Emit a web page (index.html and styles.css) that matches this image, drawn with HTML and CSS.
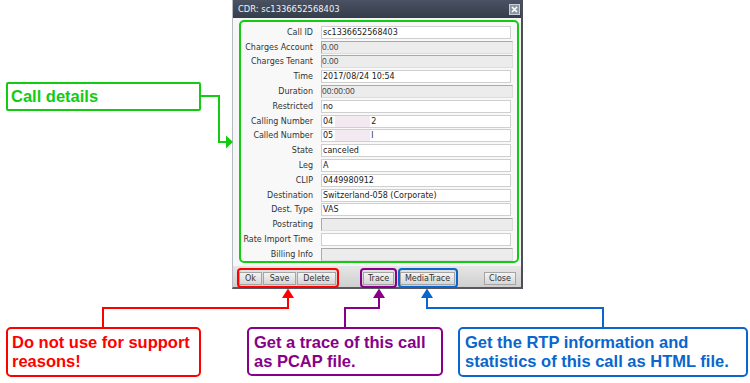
FILE: index.html
```html
<!DOCTYPE html>
<html>
<head>
<meta charset="utf-8">
<link rel="stylesheet" href="styles.css">
</head>
<body>
<div class="canvas">
  <div class="dialog">
    <div class="titlebar">
      <span class="title">CDR: sc1336652568403</span>
      <svg class="closex" width="11" height="11" viewBox="0 0 11 11">
        <rect x="0.5" y="0.5" width="10" height="10" fill="#8d94a3" stroke="#c9ced8"/>
        <path d="M3 3 L8 8 M8 3 L3 8" stroke="#ffffff" stroke-width="1.6"/>
      </svg>
    </div>
    <div class="body">
      <div class="details">
        <div class="lbl">Call ID</div><div class="field">sc1336652568403</div>
        <div class="lbl">Charges Account</div><div class="field dis">0.00</div>
        <div class="lbl">Charges Tenant</div><div class="field dis">0.00</div>
        <div class="lbl">Time</div><div class="field">2017/08/24 10:54</div>
        <div class="lbl">Duration</div><div class="field dis">00:00:00</div>
        <div class="lbl">Restricted</div><div class="field">no</div>
        <div class="lbl">Calling Number</div><div class="field">04<span class="blur"></span>2</div>
        <div class="lbl">Called Number</div><div class="field">05<span class="blur"></span>l</div>
        <div class="lbl">State</div><div class="field">canceled</div>
        <div class="lbl">Leg</div><div class="field">A</div>
        <div class="lbl">CLIP</div><div class="field">0449980912</div>
        <div class="lbl">Destination</div><div class="field">Switzerland-058 (Corporate)</div>
        <div class="lbl">Dest. Type</div><div class="field">VAS</div>
        <div class="lbl">Postrating</div><div class="field dis"></div>
        <div class="lbl">Rate Import Time</div><div class="field"></div>
        <div class="lbl">Billing Info</div><div class="field dis"></div>
      </div>
    </div>
    <div class="buttonbar">
      <div class="btn b-ok">Ok</div>
      <div class="btn b-save">Save</div>
      <div class="btn b-del">Delete</div>
      <div class="btn b-trace">Trace</div>
      <div class="btn b-media">MediaTrace</div>
      <div class="btn b-close">Close</div>
    </div>
  </div>

  <div class="hl hl-red"></div>
  <div class="hl hl-purple"></div>
  <div class="hl hl-blue"></div>

  <svg class="arrows" width="750" height="383" viewBox="0 0 750 383">
    <polyline points="201,96 219,96 219,142 227,142" fill="none" stroke="#11cc11" stroke-width="2"/>
    <polygon points="226,135.5 233,142 226,148.5" fill="#11cc11"/>
    <polyline points="103,328 103,308 288,308 288,297" fill="none" stroke="#ff0000" stroke-width="2"/>
    <polygon points="282,298 294,298 288,288.5" fill="#ff0000"/>
    <polyline points="345,328 345,308 379,308 379,297" fill="none" stroke="#880088" stroke-width="2"/>
    <polygon points="373,298 385,298 379,288.5" fill="#880088"/>
    <polyline points="603,328 603,308 427,308 427,297" fill="none" stroke="#0a66cc" stroke-width="2"/>
    <polygon points="421,298 433,298 427,288.5" fill="#0a66cc"/>
  </svg>

  <div class="note n-green">Call details</div>
  <div class="note n-red">Do not use for support<br>reasons!</div>
  <div class="note n-purple">Get a trace of this call<br>as PCAP file.</div>
  <div class="note n-blue">Get the RTP information and<br>statistics of this call as HTML file.</div>
</div>
</body>
</html>
```
FILE: styles.css
```css
html, body {
  margin: 0;
  padding: 0;
  background: #ffffff;
}
.canvas {
  position: relative;
  width: 750px;
  height: 383px;
  overflow: hidden;
  background: #ffffff;
  font-family: "DejaVu Sans", sans-serif;
}
.dialog {
  position: absolute;
  left: 232px;
  top: 0;
  width: 291px;
  height: 289px;
  box-sizing: border-box;
  border-left: 1px solid #b4b9c2;
  border-right: 2px solid #4b4e55;
  border-bottom: 2px solid #55585e;
  background: #f6f6f6;
  display: flex;
  flex-direction: column;
}
.titlebar {
  height: 18px;
  flex: none;
  background: linear-gradient(#4a5263, #363d4b);
  display: flex;
  align-items: center;
  justify-content: space-between;
  padding: 0 1px 0 5px;
}
.title {
  color: #f2f2f2;
  font-size: 8.4px;
  white-space: nowrap;
}
.closex {
  display: block;
}
.body {
  flex: none;
  height: 248px;
  padding: 2px 0 0 6px;
  box-sizing: border-box;
}
.details {
  width: 280px;
  height: 243px;
  box-sizing: border-box;
  border: 2px solid #11cc11;
  border-radius: 5px;
  background: #f8f8f8;
  display: grid;
  grid-template-columns: 72px 192px;
  column-gap: 8px;
  grid-auto-rows: 14.8px;
  align-items: center;
  padding-top: 3px;
}
.lbl {
  text-align: right;
  font-size: 8px;
  color: #333333;
  white-space: nowrap;
}
.field {
  width: 190px;
  height: 13px;
  box-sizing: border-box;
  border: 1px solid #cfcfcf;
  background: #ffffff;
  font-size: 8px;
  line-height: 11px;
  color: #222222;
  padding-left: 1px;
  white-space: nowrap;
  overflow: hidden;
  display: flex;
  align-items: center;
}
.field.dis {
  width: 192px;
  background: #ececec;
  border-color: #a9a9a9 #dddddd #dddddd #a9a9a9;
  font-family: "Liberation Sans", sans-serif;
  font-size: 8.4px;
  color: #444444;
  padding-left: 0;
}
.blur {
  display: inline-block;
  width: 35px;
  height: 11px;
  background: #f3e9f1;
  margin: 0 1px 0 2px;
}
.buttonbar {
  flex: 1;
  background: linear-gradient(#e6e6e6, #cfcfcf);
  display: flex;
  align-items: flex-start;
  padding: 6px 0 0 6px;
}
.btn {
  height: 13px;
  box-sizing: border-box;
  border: 1px solid #a5a5a5;
  background: linear-gradient(#f3f3f3, #d6d6d6);
  font-size: 8px;
  color: #333333;
  display: flex;
  align-items: center;
  justify-content: center;
}
.b-ok { width: 23px; }
.b-save { width: 33px; margin-left: 1px; }
.b-del { width: 39px; margin-left: 1px; }
.b-trace { width: 31px; margin-left: 27px; }
.b-media { width: 55px; margin-left: 6px; }
.b-close { width: 32px; margin-left: 29px; }

.hl {
  position: absolute;
  top: 268px;
  height: 20px;
  box-sizing: border-box;
  border: 2px solid;
  border-radius: 4px;
}
.hl-red { left: 237px; width: 102px; border-color: #ff0000; }
.hl-purple { left: 360px; width: 37px; border-color: #880088; }
.hl-blue { left: 398px; width: 60px; border-color: #0a66cc; }

.arrows {
  position: absolute;
  left: 0;
  top: 0;
}
.note {
  position: absolute;
  box-sizing: border-box;
  background: #ffffff;
  border: 2px solid;
  border-radius: 5px;
  font-family: "Liberation Sans", Arial, sans-serif;
  font-weight: bold;
  font-size: 16.5px;
  line-height: 19px;
  white-space: nowrap;
}
.n-green {
  left: 6px; top: 82px; width: 195px; height: 29px;
  border-color: #11cc11; color: #11cc11;
  border-radius: 2px;
  padding: 3px 0 0 3px;
}
.n-red {
  left: 6px; top: 327px; width: 195px; height: 50px;
  border-color: #ff0000; color: #ff0000;
  padding: 4px 0 0 4px;
}
.n-purple {
  left: 247px; top: 327px; width: 196px; height: 49px;
  border-color: #880088; color: #880088;
  padding: 4px 0 0 5px;
}
.n-blue {
  left: 458px; top: 327px; width: 290px; height: 50px;
  border-color: #0a66cc; color: #0a66cc;
  padding: 4px 0 0 5px;
}
```
